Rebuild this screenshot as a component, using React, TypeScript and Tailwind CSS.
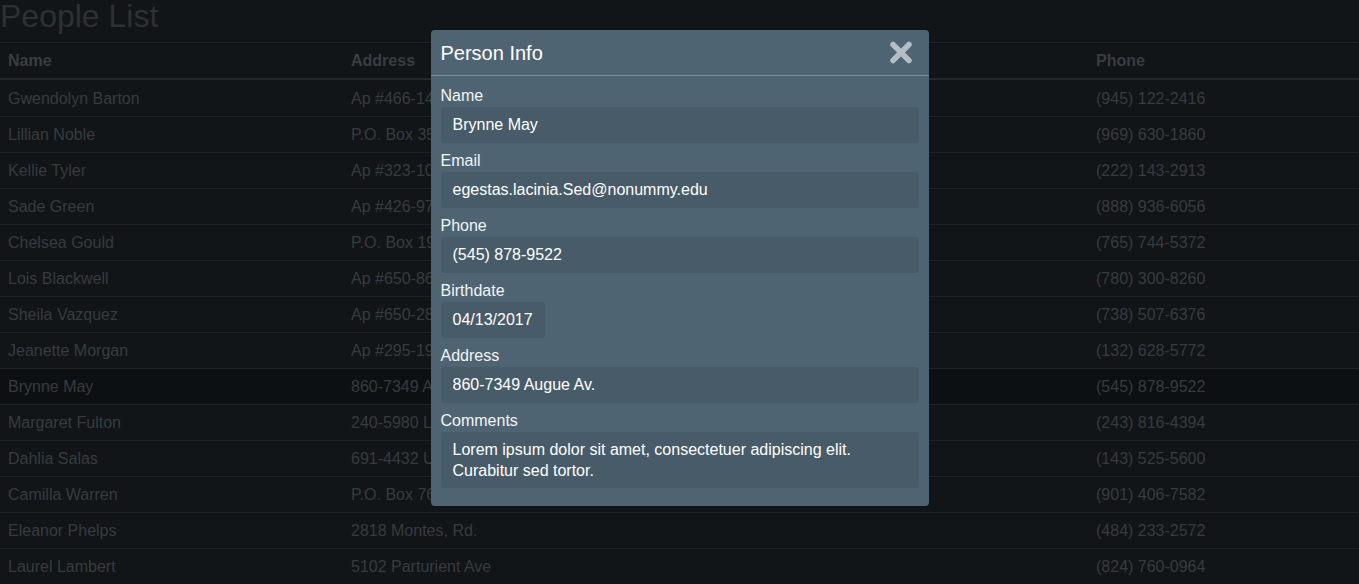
import React from "react";

type Person = { name: string; address: string; phone: string };

const PEOPLE: Person[] = [
  { name: "Gwendolyn Barton", address: "Ap #466-1460 Risus Rd.", phone: "(945) 122-2416" },
  { name: "Lillian Noble", address: "P.O. Box 351, 4120 Nisi St.", phone: "(969) 630-1860" },
  { name: "Kellie Tyler", address: "Ap #323-1052 Eget Ave", phone: "(222) 143-2913" },
  { name: "Sade Green", address: "Ap #426-9712 Mauris Rd.", phone: "(888) 936-6056" },
  { name: "Chelsea Gould", address: "P.O. Box 198, 7771 Quis St.", phone: "(765) 744-5372" },
  { name: "Lois Blackwell", address: "Ap #650-8675 Nulla Av.", phone: "(780) 300-8260" },
  { name: "Sheila Vazquez", address: "Ap #650-2836 Velit Road", phone: "(738) 507-6376" },
  { name: "Jeanette Morgan", address: "Ap #295-1920 Cras St.", phone: "(132) 628-5772" },
  { name: "Brynne May", address: "860-7349 Augue Av.", phone: "(545) 878-9522" },
  { name: "Margaret Fulton", address: "240-5980 Lorem Rd.", phone: "(243) 816-4394" },
  { name: "Dahlia Salas", address: "691-4432 Ut Street", phone: "(143) 525-5600" },
  { name: "Camilla Warren", address: "P.O. Box 763, 5502 Dui Av.", phone: "(901) 406-7582" },
  { name: "Eleanor Phelps", address: "2818 Montes, Rd.", phone: "(484) 233-2572" },
  { name: "Laurel Lambert", address: "5102 Parturient Ave", phone: "(824) 760-0964" },
];

const selected = "Brynne May";

function Field({ label, value, narrow, multi }: { label: string; value: string; narrow?: boolean; multi?: boolean }) {
  return (
    <div className="mb-[8px]">
      <div className="h-[20px] leading-[20px] text-[16px] text-[#f2f4f5]">{label}</div>
      <div
        className={[
          "mt-[1px] rounded-[3px] bg-[#475b68] px-[12px] text-[16px] text-white",
          narrow ? "w-[104px]" : "w-full",
          multi ? "py-[7px] leading-[21px]" : "h-[36px] leading-[36px]",
        ].join(" ")}
      >
        {value}
      </div>
    </div>
  );
}

export default function App() {
  return (
    <div className="relative min-h-[584px] overflow-hidden bg-[#111518] font-['Liberation_Sans',Arial,sans-serif]">
      <h1 className="text-[32px] leading-none text-[#2d3134] mb-[10px]">People List</h1>

      <div className="border-t border-[#1e2327]">
        <div className="grid grid-cols-[343px_745px_1fr] h-[37px] items-center border-b-2 border-[#23282c] text-[16px] font-bold text-[#393d41]">
          <div className="px-[8px]">Name</div>
          <div className="px-[8px]">Address</div>
          <div className="px-[8px]">Phone</div>
        </div>
        {PEOPLE.map((p, i) => (
          <div
            key={p.name}
            className={[
              "grid grid-cols-[343px_745px_1fr] h-[36px] items-center border-t text-[16px] text-[#373b3f]",
              i > 0 ? "border-[#1e2327]" : "border-transparent",
              p.name === selected ? "bg-[#0d1012]" : "",
            ].join(" ")}
          >
            <div className="px-[8px] whitespace-nowrap">{p.name}</div>
            <div className="px-[8px] whitespace-nowrap">{p.address}</div>
            <div className="px-[8px] whitespace-nowrap">{p.phone}</div>
          </div>
        ))}
      </div>

      <div className="absolute inset-0 flex justify-center">
        <div className="mt-[30px] h-fit w-[498px] rounded-[4px] bg-[#4f6473]">
          <div className="flex items-center justify-between border-b border-[#7b8e9a] pl-[10px] pr-[16px] pt-[11px] pb-[10px]">
            <div className="text-[20px] leading-[24px] text-white">Person Info</div>
            <svg width="24" height="23" viewBox="0 0 24 23" className="mt-[-1px]">
              <path d="M4 3.5 L20 19.5 M20 3.5 L4 19.5" stroke="#b3bec5" strokeWidth="5.5" strokeLinecap="round" />
            </svg>
          </div>
          <div className="px-[10px] pt-[10px] pb-[10px]">
            <Field label="Name" value="Brynne May" />
            <Field label="Email" value="egestas.lacinia.Sed@nonummy.edu" />
            <Field label="Phone" value="(545) 878-9522" />
            <Field label="Birthdate" value="04/13/2017" narrow />
            <Field label="Address" value="860-7349 Augue Av." />
            <Field
              label="Comments"
              value="Lorem ipsum dolor sit amet, consectetuer adipiscing elit. Curabitur sed tortor."
              multi
            />
          </div>
        </div>
      </div>
    </div>
  );
}
